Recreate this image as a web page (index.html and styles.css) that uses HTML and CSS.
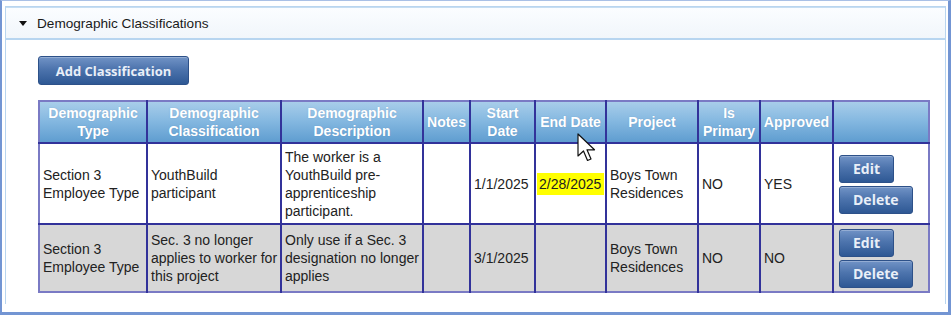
FILE: index.html
```html
<!DOCTYPE html>
<html>
<head>
<meta charset="utf-8">
<link rel="stylesheet" href="styles.css">
</head>
<body>
<div class="frame">
  <div class="panel">
    <div class="panel-head">
      <span class="caret"></span>
      <span class="panel-title">Demographic Classifications</span>
    </div>
    <div class="panel-body">
      <button class="btn btn-add">Add Classification</button>
      <div class="table-wrap">
        <table class="grid">
          <colgroup>
            <col style="width:108px"><col style="width:134px"><col style="width:142px"><col style="width:47px"><col style="width:65px"><col style="width:71px"><col style="width:92px"><col style="width:62px"><col style="width:73px"><col style="width:96px">
          </colgroup>
          <thead>
            <tr>
              <th>Demographic<br>Type</th>
              <th>Demographic<br>Classification</th>
              <th>Demographic<br>Description</th>
              <th>Notes</th>
              <th>Start<br>Date</th>
              <th>End Date</th>
              <th>Project</th>
              <th>Is<br>Primary</th>
              <th>Approved</th>
              <th></th>
            </tr>
          </thead>
          <tbody>
            <tr class="row-white">
              <td>Section 3<br>Employee Type</td>
              <td>YouthBuild<br>participant</td>
              <td>The worker is a<br>YouthBuild pre-<br>apprenticeship<br>participant.</td>
              <td></td>
              <td>1/1/2025</td>
              <td class="hl-cell"><span class="hl">2/28/2025</span></td>
              <td>Boys Town<br>Residences</td>
              <td>NO</td>
              <td>YES</td>
              <td class="actions"><button class="btn btn-sm">Edit</button><button class="btn btn-sm">Delete</button></td>
            </tr>
            <tr class="row-grey">
              <td>Section 3<br>Employee Type</td>
              <td>Sec. 3 no longer<br>applies to worker for<br>this project</td>
              <td>Only use if a Sec. 3<br>designation no longer<br>applies</td>
              <td></td>
              <td>3/1/2025</td>
              <td></td>
              <td>Boys Town<br>Residences</td>
              <td>NO</td>
              <td>NO</td>
              <td class="actions"><button class="btn btn-sm">Edit</button><button class="btn btn-sm">Delete</button></td>
            </tr>
          </tbody>
        </table>
        <svg class="cursor" width="22" height="30" viewBox="0 0 22 30">
          <path d="M2 1 L2 23 L7.5 18 L11.5 27.5 L15 26 L11 16.8 L18.5 16.8 Z" fill="#fff" stroke="#111" stroke-width="1.2" stroke-linejoin="round"/>
        </svg>
      </div>
    </div>
  </div>
</div>
</body>
</html>
```

FILE: styles.css
```css
html, body {
  margin: 0;
  padding: 0;
  background: #ffffff;
}

.frame {
  width: 951px;
  height: 315px;
  box-sizing: border-box;
  border-left: 2px solid #7395d3;
  border-right: 3px solid #7395d3;
  border-bottom: 3px solid #7395d3;
  border-top: 1px solid #a9c0e6;
  padding: 5px 2px 0 3px;
  overflow: hidden;
}

.panel {
  height: 298px;
  box-sizing: border-box;
  border: 1px solid #b9d5ef;
  border-bottom: none;
  background: #ffffff;
}

.panel-head {
  height: 33px;
  box-sizing: border-box;
  border-top: 1px solid #c6def3;
  border-bottom: 2px solid #b7d5f0;
  background: linear-gradient(#fbfdff, #f1f6fb);
  display: flex;
  align-items: center;
  padding-left: 13px;
  gap: 10px;
}

.caret {
  width: 0;
  height: 0;
  border-left: 4px solid transparent;
  border-right: 4px solid transparent;
  border-top: 5px solid #111;
  margin-top: 1px;
}

.panel-title {
  font-family: "Liberation Sans", Arial, sans-serif;
  font-size: 13.6px;
  color: #1a1a1a;
}

.panel-body {
  padding: 16px 0 0 32px;
}

.btn {
  display: block;
  font-family: "Open Sans", sans-serif;
  font-weight: 700;
  color: #e9eff8;
  border: 1px solid #2d5189;
  border-radius: 3px;
  background: linear-gradient(#7193c6, #4d74ad 45%, #2e5894);
  box-shadow: inset 0 1px 0 rgba(255, 255, 255, 0.25);
  padding: 0;
  cursor: default;
}

.btn-add {
  width: 151px;
  height: 29px;
  font-size: 13px;
}

.table-wrap {
  position: relative;
  margin-top: 15px;
  width: 890px;
}

.grid {
  border-collapse: collapse;
  table-layout: fixed;
  width: 890px;
  border: 2px solid #7a7ac4;
  font-family: "Liberation Sans", Arial, sans-serif;
  font-size: 14px;
  color: #222;
}

.grid th {
  height: 40px;
  padding: 0 2px;
  font-weight: 700;
  color: #ffffff;
  line-height: 18px;
  text-align: center;
  vertical-align: middle;
  background: linear-gradient(#a8cdea, #86b9e1 45%, #5f9dd0);
  border-left: 2px solid #32329a;
  border-bottom: 2px solid #32329a;
  text-shadow: 0 0 1px rgba(60, 100, 150, 0.4);
}

.grid th:first-child,
.grid td:first-child {
  border-left: none;
}

.grid td {
  padding: 3px 3px;
  line-height: 18px;
  vertical-align: middle;
  text-align: left;
  border-left: 2px solid #32329a;
  border-bottom: 2px solid #32329a;
  white-space: nowrap;
}

.grid tbody tr:last-child td {
  border-bottom: none;
}

.row-white {
  height: 81px;
}

.row-white td {
  background: #ffffff;
}

.row-grey {
  height: 68px;
}

.row-grey td {
  background: #d7d7d7;
}

.hl-cell.hl-cell {
  padding-left: 1px;
  padding-right: 0;
}

.hl {
  display: inline-block;
  background: #ffff00;
  line-height: 22px;
  padding: 0 3px 0 2px;
}

.actions.actions {
  padding: 4px 0 3px 5px;
}

.btn-sm {
  font-size: 14px;
  height: 28px;
  padding: 0 13px;
  line-height: 24px;
}

.btn-sm + .btn-sm {
  margin-top: 3px;
}

.cursor {
  position: absolute;
  left: 538px;
  top: 33px;
}
```
